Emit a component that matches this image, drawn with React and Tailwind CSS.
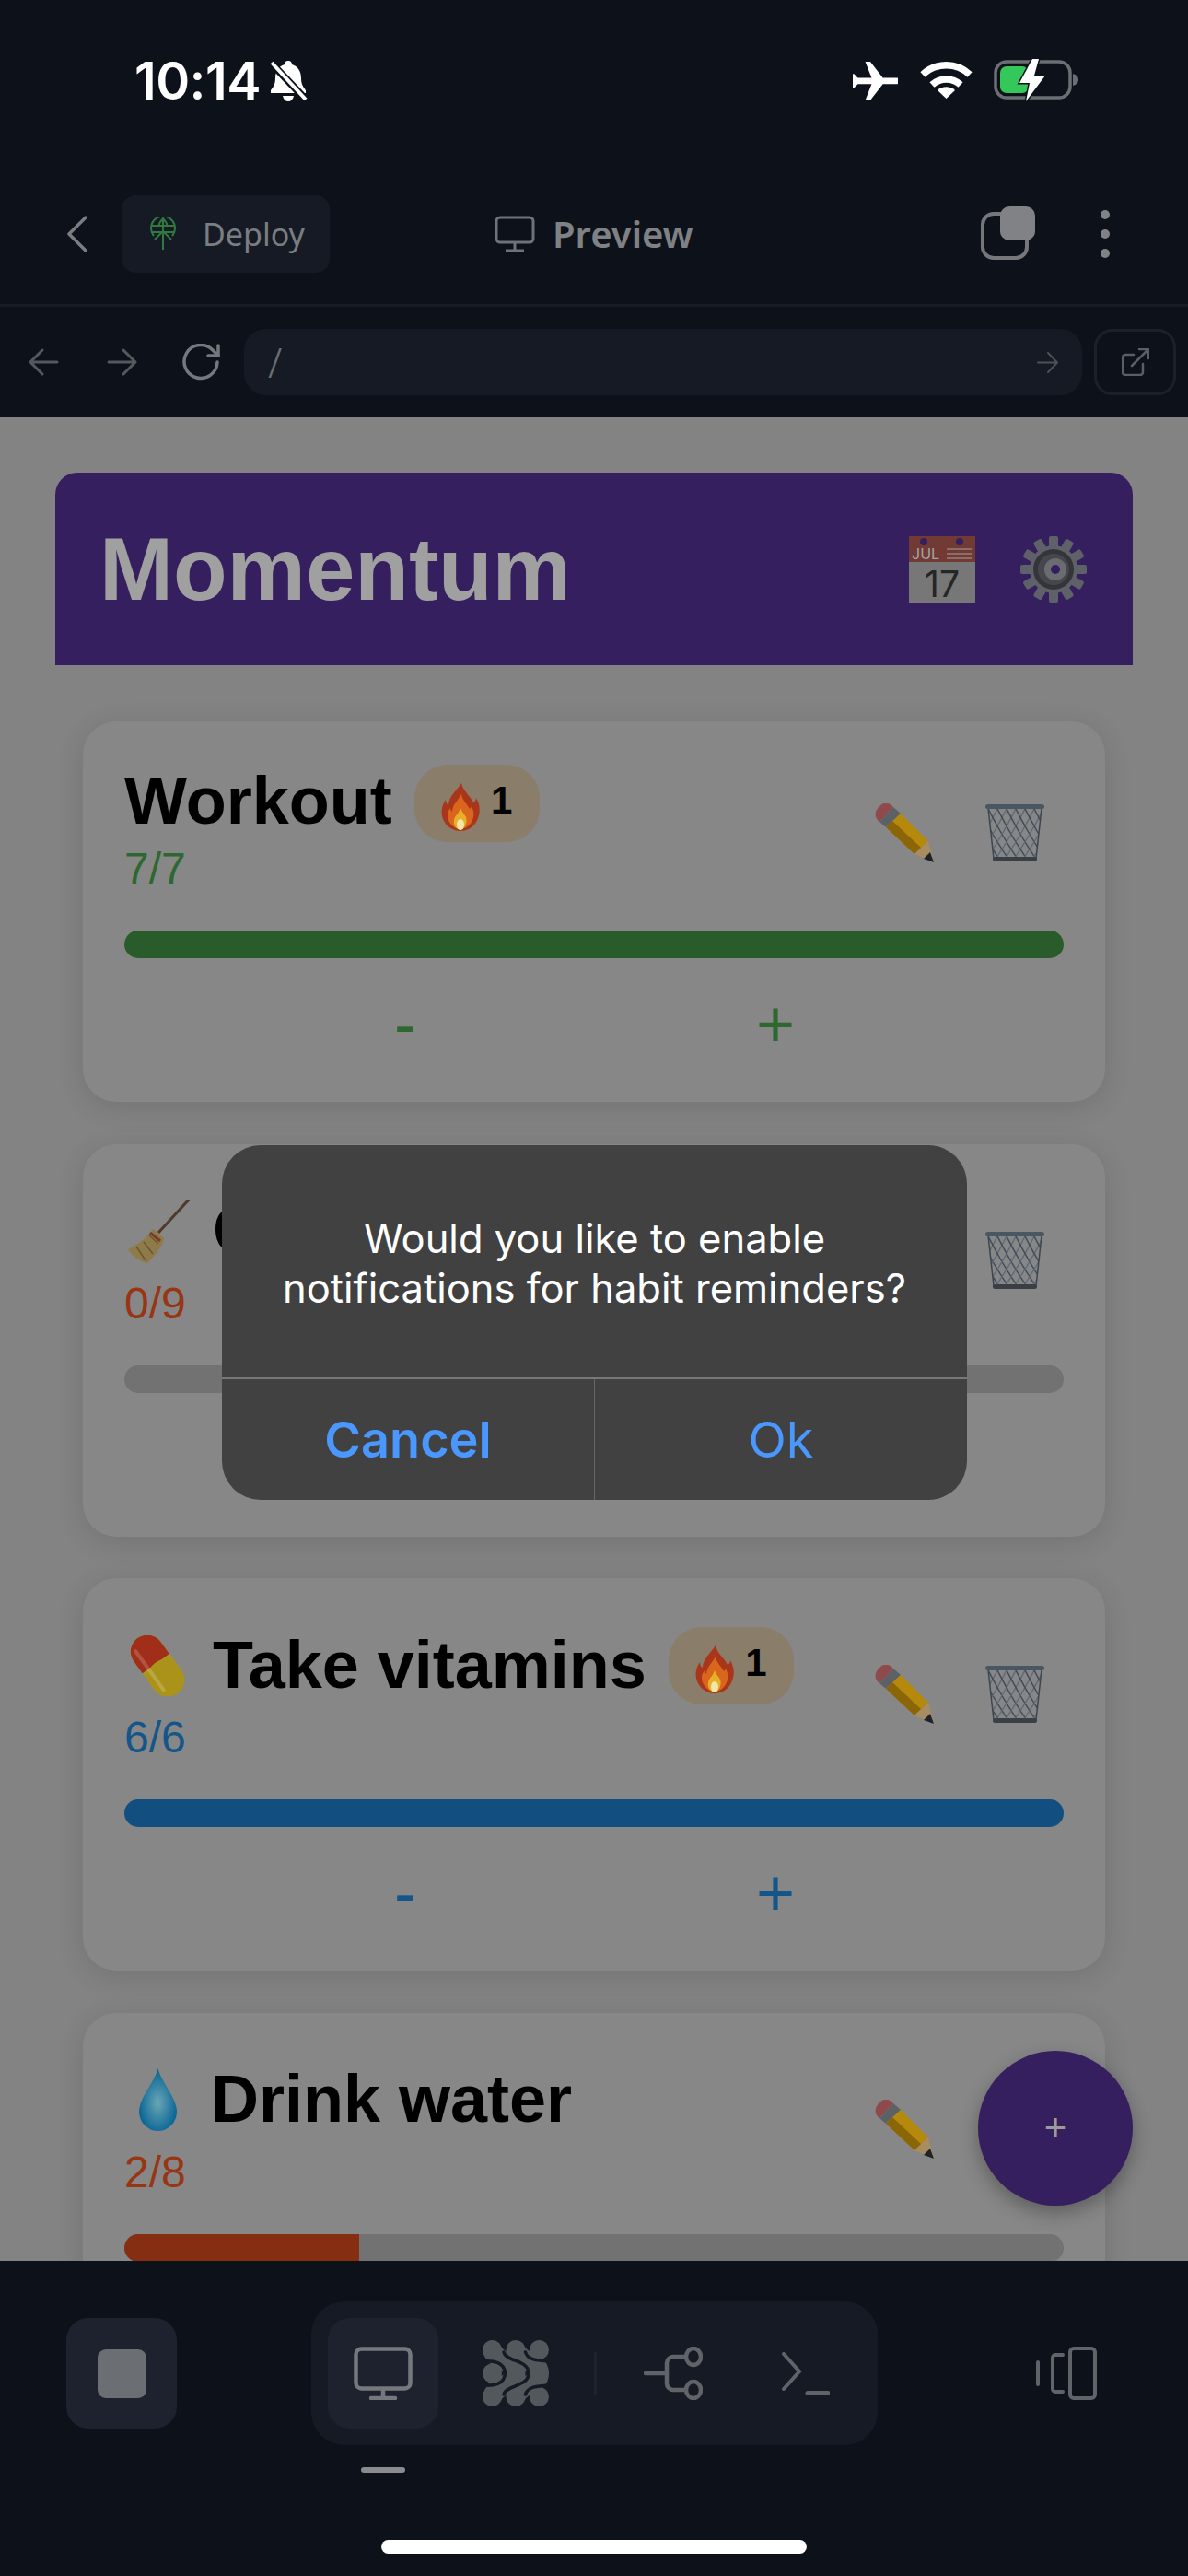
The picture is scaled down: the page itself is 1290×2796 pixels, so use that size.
import React from 'react';

const GEAR_TEETH = [0, 30, 60, 90, 120, 150, 180, 210, 240, 270, 300, 330];
const MESH_OFFSETS = [-40, -30, -20, -10, 0, 10, 20, 30, 40, 50, 60];

function Flame({ className }) {
    return (
        <svg className={className} viewBox="0 0 42 52">
            <path d="M22 0c2 9 9 13 13 21 2-1 3-3 3-5 4 7 5 14 2 22-3 9-11 14-19 14S5 47 2 39c-3-8-1-15 3-21 0 3 1 5 3 6C8 15 16 9 22 0z" fill="#a9361a" />
            <path d="M22 12c1 7 6 10 9 16 1-1 2-2 2-3 3 6 3 11 1 15-2 6-8 10-13 10S10 46 8 40c-2-5-1-9 2-13 0 2 1 3 2 4 0-7 6-12 10-19z" fill="#d9661c" />
            <path d="M21 27c1 4 4 6 6 10 2 5-1 13-6 14-6-1-9-8-6-14 2-3 5-6 6-10z" fill="#e8b02a" />
            <ellipse cx="21" cy="45" rx="4" ry="6" fill="#f2e6a8" />
        </svg>
    );
}

function Pencil({ className }) {
    return (
        <svg className={className} viewBox="0 0 65 65">
            <path d="M5 20C1 17 -1 12 2 7 5 2 9 -1 13 0c3 0 5 2 7 4z" fill="#8f4a4c" />
            <polygon points="20,4 28,11 12,26 5,20" fill="#5c6166" />
            <polygon points="28,11 58,41 43,55 12,26" fill="#b58a0c" />
            <polygon points="19,19 50,48 43,55 12,26" fill="#8a6608" />
            <polygon points="58,41 64,64 43,55" fill="#a88d62" />
            <polygon points="60,53 64,64 53,60" fill="#1f2228" />
        </svg>
    );
}

function Trash({ className, id }) {
    return (
        <svg className={className} viewBox="0 0 65 65">
            <defs>
                <clipPath id={id}>
                    <polygon points="3,4 61,4 55,60 9,60" />
                </clipPath>
            </defs>
            <g clipPath={`url(#${id})`} fill="none" strokeWidth="1.500">
                {MESH_OFFSETS.map((d) => (
                    <g key={d}>
                        <path d={`M${d} 0q8 16 16 30t20 32`} stroke="#3f4b57" />
                        <path d={`M${d + 36} 0q-8 16-16 30t-20 32`} stroke="#5d6c7a" />
                    </g>
                ))}
            </g>
            <path d="M3 5l6 55M61 5l-6 55" stroke="#3c4650" strokeWidth="1.500" />
            <rect x="0" y="1" width="64" height="5" rx="2.500" fill="#4a5661" />
            <rect x="8" y="58" width="48" height="5" rx="2.500" fill="#3a3f45" />
        </svg>
    );
}

function Broom({ className }) {
    return (
        <svg className={className} viewBox="0 0 68 69">
            <line x1="67" y1="0" x2="34" y2="36" stroke="#4f3b2c" strokeWidth="3" />
            <path d="M28 32l12 10c-2 10-10 19-18 27-7-1-16-7-21-15 8-4 21-12 27-22z" fill="#8f7a4a" />
            <path d="M24 39l10 9M10 51l10 15M18 46l10 13" stroke="#6a5832" strokeWidth="1.600" fill="none" />
            <path d="M25 36l11 9" stroke="#7d3b2a" strokeWidth="3" />
        </svg>
    );
}

function Pill({ className }) {
    return (
        <svg className={className} viewBox="0 0 66 66">
            <g transform="rotate(-36 33 33)">
                <rect x="15" y="-4" width="36" height="74" rx="18" fill="#a89a1e" />
                <path d="M15 30V14a18 18 0 0 1 36 0v16z" fill="#a02e18" />
                <path d="M15 36q18-14 36 0v16a18 18 0 0 1-36 0z" fill="#ab931a" />
                <rect x="21" y="4" width="4" height="56" rx="2" fill="#ffffff" opacity="0.18" />
            </g>
        </svg>
    );
}

function Drop({ className }) {
    return (
        <svg className={className} viewBox="0 0 41 68">
            <defs>
                <radialGradient id="drop" cx="50%" cy="55%" r="50%">
                    <stop offset="0%" stopColor="#6aa6b5" />
                    <stop offset="100%" stopColor="#0c6796" />
                </radialGradient>
            </defs>
            <path d="M20.500 0c3 14 20.500 32 20.500 47a20.500 21 0 0 1-41 0C0 32 17.500 14 20.500 0z" fill="url(#drop)" />
        </svg>
    );
}

function Calendar({ className }) {
    return (
        <svg className={className} viewBox="0 0 72 72">
            <rect x="0" y="0" width="72" height="72" fill="#777" />
            <rect x="0" y="0" width="72" height="28" fill="#713a35" />
            <circle cx="16" cy="6" r="4" fill="#351f5f" />
            <circle cx="55" cy="6" r="4" fill="#351f5f" />
            <text x="3" y="25" fontSize="16" fill="#a6a6a6" fontFamily="Inter, sans-serif">JUL</text>
            <text x="36" y="66" fontSize="39" textAnchor="middle" fill="#262626" fontFamily="Inter, sans-serif">17</text>
            <g fill="#8c6d69">
                <rect x="41" y="13" width="27" height="2" />
                <rect x="41" y="18" width="27" height="2" />
                <rect x="41" y="23" width="27" height="2" />
            </g>
        </svg>
    );
}

function Gear({ className }) {
    return (
        <svg className={className} viewBox="0 0 72 72">
            <g fill="#5f6168">
                {GEAR_TEETH.map((a) => (
                    <rect key={a} x="31" y="0" width="10" height="14" rx="2" transform={`rotate(${a} 36 36)`} />
                ))}
            </g>
            <circle cx="36" cy="36" r="26" fill="#5f6168" />
            <circle cx="36" cy="36" r="22" fill="#34353a" />
            <circle cx="36" cy="36" r="17" fill="#46474c" />
            <circle cx="38" cy="36" r="12" fill="#6a6c72" />
            <circle cx="38" cy="36" r="5" fill="#351f5f" />
        </svg>
    );
}

function HabitCard({ id, emoji, title, done, total, color, barColor, streak }) {
    const pct = Math.round((done / total) * 100);
    const hasEmoji = Boolean(emoji);

    return (
        <div className="bg-[#878787] rounded-[36px] shadow-[0_6px_30px_rgba(0,0,0,0.12)] px-[45px] shrink-0">
            <div className={`flex justify-between ${hasEmoji ? 'pt-[45px]' : 'pt-[47px]'}`}>
                <div>
                    <div className={`flex items-center ${hasEmoji ? 'h-[99px]' : 'h-[84px]'}`}>
                        {emoji}
                        <span className={`text-[72px] font-bold leading-none text-black ${hasEmoji ? 'mb-[2px]' : 'mb-[7px]'}`}>{title}</span>
                        {streak && (
                            <span className="ml-[24px] w-[136px] h-[84px] rounded-[36px] bg-[#8a7d6a] flex items-center justify-center gap-[12px]">
                                <Flame className="w-[42px] h-[52px] mt-[8px]" />
                                <span className="text-[42px] font-bold leading-none text-black mb-[6px]">{streak}</span>
                            </span>
                        )}
                    </div>
                    <div className={`text-[48px] leading-[55px] mt-[1px] ${color}`}>{done}/{total}</div>
                </div>
                <div className={`flex gap-[55px] mr-[20px] ${hasEmoji ? 'mt-[49px]' : 'mt-[42px]'}`}>
                    <Pencil className="w-[65px] h-[65px]" />
                    <Trash id={`mesh-${id}`} className="w-[65px] h-[65px]" />
                </div>
            </div>
            <div className="h-[30px] mt-[40px] rounded-[15px] bg-[#727272] overflow-hidden">
                <div className={`h-full ${barColor}`} style={{ width: `${pct}%` }} />
            </div>
            <div className={`flex justify-center pr-[8px] h-[84px] mt-[29px] mb-[43px] ${color}`}>
                <span className="w-[402px] text-center text-[72px] leading-[84px]">-</span>
                <span className="w-[402px] text-center text-[72px] leading-[84px]">+</span>
            </div>
        </div>
    );
}

function StatusBar() {
    return (
        <div className="h-[212px] relative">
            <div className="flex items-start pt-[56px] pl-[146px]">
                <span className="text-[56px] leading-[64px] font-semibold text-white tracking-[-0.5px] font-['Inter',sans-serif]">10:14</span>
                <svg className="w-[42px] h-[44px] ml-[9px] mt-[10px]" viewBox="0 0 42 44">
                    <path d="M21 0c3 0 4 2 4 4 7 2 10 8 10 15 0 6 2 9 5 13v3H2v-3c3-4 5-7 5-13 0-7 3-13 10-15 0-2 1-4 4-4z" fill="#fff" />
                    <path d="M15 38h12c-1 4-3 6-6 6s-5-2-6-6z" fill="#fff" />
                    <line x1="4" y1="4" x2="40" y2="42" stroke="#0d111a" strokeWidth="8" />
                    <line x1="3" y1="2" x2="40" y2="42" stroke="#fff" strokeWidth="4" />
                </svg>
            </div>
            <div className="absolute left-[926px] top-[65px] flex items-start">
                <svg className="w-[49px] h-[44px] mt-[2px]" viewBox="3 2 18 20" preserveAspectRatio="none">
                    <path transform="rotate(90 12 12)" d="M21 16v-2l-8-5V3.500c0-.83-.67-1.500-1.500-1.500S10 2.670 10 3.500V9l-8 5v2l8-2.500V19l-2 1.500V22l3.500-1 3.500 1v-1.500L13 19v-5.500l8 2.500z" fill="#fff" />
                </svg>
                <svg className="w-[57px] h-[42px] ml-[24px]" viewBox="0 0 57 42">
                    <path d="M3 16a37 37 0 0 1 51 0" fill="none" stroke="#fff" strokeWidth="7.500" />
                    <path d="M13 27a23 23 0 0 1 31 0" fill="none" stroke="#fff" strokeWidth="7.500" />
                    <path d="M19 33a14 14 0 0 1 19 0L28.500 42z" fill="#fff" />
                </svg>
                <svg className="w-[93px] h-[46px] ml-[23px] -mt-[1px]" viewBox="0 0 93 46">
                    <rect x="2" y="3" width="81" height="39" rx="12" fill="none" stroke="#6b6e72" strokeWidth="3.500" />
                    <path d="M86 16c4 1 6 3 6 6.500S90 28 86 29z" fill="#6b6e72" />
                    <rect x="7" y="8" width="31" height="29" rx="7" fill="#34c759" />
                    <path d="M42 0L28 26h11l-4 20 21-28H44l5-18z" fill="#fff" stroke="#0d111a" strokeWidth="3" paintOrder="stroke" />
                </svg>
            </div>
        </div>
    );
}

function TopBar() {
    return (
        <div className="h-[84px] flex items-center relative">
            <svg className="w-[23px] h-[40px] ml-[72px]" viewBox="0 0 23 40">
                <polyline points="21,2 3,20 21,38" fill="none" stroke="#7b7d80" strokeWidth="3.500" strokeLinecap="round" strokeLinejoin="round" />
            </svg>
            <div className="ml-[37px] w-[226px] h-[84px] rounded-[15px] bg-[#161a24] flex items-center pl-[31px]">
                <svg className="w-[28px] h-[36px]" viewBox="0 0 28 36" fill="none" stroke="#2f7a3f" strokeWidth="2">
                    <path d="M4 20A13 13 0 1 1 24 20" />
                    <path d="M14 1v34M2 9h24M2 16h24" />
                    <path d="M9 10c1-4 3-7 5-9 2 2 4 5 5 9" />
                    <path d="M5 24l9-9 9 9" />
                </svg>
                <span className="ml-[29px] text-[34px] leading-none text-[#7a7d82] font-['Noto_Sans',sans-serif]">Deploy</span>
            </div>
            <svg className="ml-[179px] w-[44px] h-[40px]" viewBox="0 0 44 40" fill="none" stroke="#6f7276" strokeWidth="3">
                <rect x="2" y="2" width="40" height="27" rx="4" />
                <path d="M22 29v8M12 38h20" />
            </svg>
            <span className="ml-[19px] text-[40px] leading-none font-semibold text-[#7f8185] font-['Noto_Sans',sans-serif]">Preview</span>
            <div className="absolute left-[1065px] top-[12px] w-[59px] h-[59px]">
                <div className="absolute left-0 top-[6px] w-[52px] h-[52px] rounded-[14px] border-[4px] border-[#75777b]" />
                <div className="absolute left-[21px] top-0 w-[38px] h-[37px] rounded-[10px] bg-[#808285]" />
            </div>
            <div className="absolute left-[1195px] top-[16px] flex flex-col gap-[11px]">
                <div className="w-[10px] h-[10px] rounded-full bg-[#808285]" />
                <div className="w-[10px] h-[10px] rounded-full bg-[#808285]" />
                <div className="w-[10px] h-[10px] rounded-full bg-[#808285]" />
            </div>
        </div>
    );
}

function NavRow() {
    return (
        <div className="h-[120px] flex items-center">
            <svg className="ml-[31px] w-[33px] h-[30px]" viewBox="0 0 33 30" fill="none" stroke="#55585d" strokeWidth="3" strokeLinecap="round" strokeLinejoin="round">
                <path d="M31 15H2M15 2L2 15l13 13" />
            </svg>
            <svg className="ml-[52px] w-[33px] h-[30px]" viewBox="0 0 33 30" fill="none" stroke="#55585d" strokeWidth="3" strokeLinecap="round" strokeLinejoin="round">
                <path d="M2 15h29M18 2l13 13-13 13" />
            </svg>
            <svg className="ml-[47px] w-[44px] h-[40px]" viewBox="0 0 44 40" fill="none" stroke="#75787c" strokeWidth="3.500" strokeLinecap="round" strokeLinejoin="round">
                <path d="M40 20a18 18 0 1 1-5-13l6 6" />
                <path d="M41 2v11H30" />
            </svg>
            <div className="ml-[25px] w-[910px] h-[72px] rounded-[24px] bg-[#161a24] flex items-center justify-between pl-[26px] pr-[26px]">
                <span className="text-[44px] leading-none font-light text-[#6b6e72] font-['Noto_Sans',sans-serif]">/</span>
                <svg className="w-[23px] h-[23px]" viewBox="0 0 23 23" fill="none" stroke="#4d5055" strokeWidth="2" strokeLinecap="round" strokeLinejoin="round">
                    <path d="M1 11.500h21M12 1l10 10.500L12 22" />
                </svg>
            </div>
            <div className="ml-[13px] w-[89px] h-[72px] rounded-[20px] border-[3px] border-[#1c202b] flex items-center justify-center">
                <svg className="w-[30px] h-[30px]" viewBox="0 0 30 30" fill="none" stroke="#5b5e63" strokeWidth="2.500" strokeLinecap="round" strokeLinejoin="round">
                    <path d="M13 7H4a3 3 0 0 0-3 3v16a3 3 0 0 0 3 3h16a3 3 0 0 0 3-3v-9" />
                    <path d="M11 19L29 1M19 1h10v10" />
                </svg>
            </div>
        </div>
    );
}

function BottomBar() {
    return (
        <div className="h-[342px] shrink-0 bg-[#0d111a] relative">
            <div className="flex items-start pt-[44px]">
                <div className="ml-[72px] mt-[18px] w-[120px] h-[120px] rounded-[24px] bg-[#1e222e] flex items-center justify-center">
                    <div className="w-[53px] h-[53px] rounded-[9px] bg-[#6b6e72]" />
                </div>
                <div className="ml-[146px] w-[615px] h-[156px] rounded-[36px] bg-[#161a25] flex items-center pl-[18px]">
                    <div className="w-[120px] h-[120px] rounded-[24px] bg-[#1e222e] flex items-center justify-center">
                        <svg className="w-[64px] h-[58px]" viewBox="0 0 64 58" fill="none" stroke="#75787c" strokeWidth="4.500" strokeLinecap="round">
                            <rect x="2.500" y="2.500" width="59" height="43" rx="6" />
                            <path d="M32 46v10M19 56h26" />
                        </svg>
                    </div>
                    <svg className="ml-[48px] w-[72px] h-[72px]" viewBox="0 0 72 72" fill="#53585c">
                        <circle cx="10.500" cy="10.500" r="10.500" />
                        <circle cx="36" cy="10.500" r="10.500" />
                        <circle cx="61.500" cy="10.500" r="10.500" />
                        <circle cx="10.500" cy="36" r="10.500" />
                        <circle cx="10.500" cy="61.500" r="10.500" />
                        <circle cx="36" cy="61.500" r="10.500" />
                        <circle cx="61.500" cy="61.500" r="10.500" />
                        <g fill="none" stroke="#53585c" strokeWidth="21">
                            <path d="M10.500 10.500C16 26 36 22 36 36 36 50 16 46 10.500 61.500" />
                            <path d="M36 10.500C42 26 61.500 22 61.500 36 61.500 50 42 46 36 61.500" />
                        </g>
                        <g fill="none" stroke="#161a25" strokeWidth="3.500" strokeLinecap="round">
                            <path d="M0 23C12 22 24 24 24.500 36 24 48 12 50 0 49" />
                            <path d="M23 13C26 24 50 21 50 36 50 51 26 48 23 59" />
                            <path d="M46.500 13C49 22 60 22 72 23" />
                            <path d="M46.500 59C49 50 60 50 72 49" />
                        </g>
                    </svg>
                    <div className="ml-[49px] w-[3px] h-[47px] bg-[#1f2330]" />
                    <svg className="ml-[51px] w-[64px] h-[58px]" viewBox="0 0 64 58" fill="none" stroke="#606367" strokeWidth="4.500" strokeLinecap="round">
                        <path d="M2 29h23" />
                        <path d="M46 11H32a7 7 0 0 0-7 7v22a7 7 0 0 0 7 7h14" />
                        <ellipse cx="54" cy="11" rx="8" ry="9" />
                        <ellipse cx="54" cy="47" rx="8" ry="9" />
                    </svg>
                    <svg className="ml-[86px] w-[52px] h-[47px]" viewBox="0 0 52 47" fill="none" stroke="#606367" strokeWidth="4" strokeLinecap="round">
                        <path d="M2 2l17 19L2 40" />
                        <path d="M28 44.500h22" strokeWidth="5" />
                    </svg>
                </div>
                <svg className="ml-[172px] mt-[49px] w-[66px] h-[58px]" viewBox="0 0 66 58" fill="none" stroke="#606367" strokeWidth="4" strokeLinecap="round">
                    <rect x="37" y="2" width="27" height="54" rx="4" />
                    <path d="M29 9H21a3 3 0 0 0-3 3v34a3 3 0 0 0 3 3h8" />
                    <path d="M2 17v24" />
                </svg>
            </div>
            <div className="absolute left-[392px] top-[224px] w-[48px] h-[6px] rounded-[3px] bg-[#8a8b8e]" />
            <div className="absolute left-[414px] top-[303px] w-[462px] h-[15px] rounded-full bg-white" />
        </div>
    );
}

export default function App() {
    return (
        <div className="w-[1290px] h-[2796px] relative overflow-hidden flex flex-col bg-[#0d111a] font-['Liberation_Sans',Arial,sans-serif]">
            <div className="shrink-0 h-[333px] border-b-[3px] border-[#171b26]">
                <StatusBar />
                <TopBar />
            </div>
            <div className="shrink-0">
                <NavRow />
            </div>

            {/* App content */}
            <div className="flex-1 bg-[#838383] overflow-hidden px-[60px] pt-[60px]">
                <div className="h-[209px] rounded-t-[24px] bg-[#351f5f] flex items-center justify-between pl-[48px] pr-[50px]">
                    <span className="text-[96px] font-bold leading-none text-[#a0a0a0]">Momentum</span>
                    <div className="flex gap-[49px]">
                        <Calendar className="w-[72px] h-[72px]" />
                        <Gear className="w-[72px] h-[72px]" />
                    </div>
                </div>
                <div className="px-[30px] mt-[61px] flex flex-col gap-[45.5px]">
                    <HabitCard id="workout" title="Workout" done={7} total={7} color="text-[#2e6830]" barColor="bg-[#295b2b]" streak={1} />
                    <HabitCard
                        id="clean"
                        emoji={<Broom className="w-[68px] h-[69px] mr-[25px] ml-[3px]" />}
                        title="Clean house"
                        done={0}
                        total={9}
                        color="text-[#973515]"
                        barColor="bg-[#862e12]"
                    />
                    <HabitCard
                        id="vitamins"
                        emoji={<Pill className="w-[66px] h-[66px] mr-[27px] ml-[3px]" />}
                        title="Take vitamins"
                        done={6}
                        total={6}
                        color="text-[#15568a]"
                        barColor="bg-[#124f80]"
                        streak={1}
                    />
                    <HabitCard
                        id="water"
                        emoji={<Drop className="w-[41px] h-[68px] mr-[37px] ml-[16px]" />}
                        title="Drink water"
                        done={2}
                        total={8}
                        color="text-[#973515]"
                        barColor="bg-[#862e12]"
                    />
                </div>
            </div>

            <BottomBar />

            {/* Floating add button */}
            <div className="absolute left-[1062px] top-[2226px] w-[168px] h-[168px] rounded-full bg-[#351f5f] shadow-[0_8px_20px_rgba(0,0,0,0.3)] flex items-center justify-center">
                <span className="text-[42px] leading-none text-[#9a9a9a]">+</span>
            </div>

            {/* Alert dialog */}
            <div className="absolute left-[241px] top-[1243px] w-[809px] h-[385px] rounded-[42px] bg-[#414141] flex flex-col font-['Inter',sans-serif]">
                <div className="h-[252px] pt-[3px] flex items-center justify-center text-center text-[43.500px] leading-[54px] text-white">
                    <p>Would you like to enable<br />notifications for habit reminders?</p>
                </div>
                <div className="flex-1 flex border-t-[2px] border-[#777777]">
                    <div className="flex-1 flex items-center justify-center text-[54px] font-semibold text-[#4a97fd] border-r-[1px] border-[#666666]">Cancel</div>
                    <div className="flex-1 flex items-center justify-center text-[54px] text-[#4a97fd]">Ok</div>
                </div>
            </div>
        </div>
    );
}
